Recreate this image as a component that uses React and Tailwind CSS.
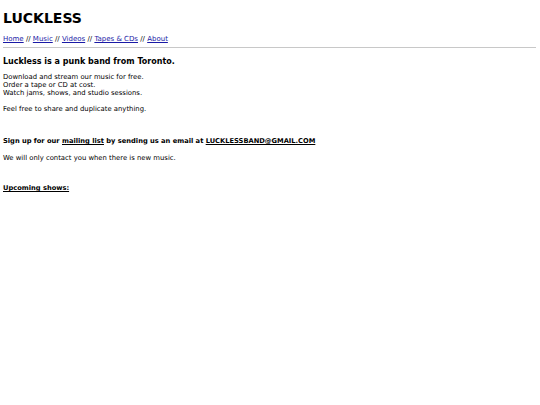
export default function App() {
  return (
    <div className="min-h-[405px] bg-white text-black px-[3px]" style={{fontFamily: '"DejaVu Sans", Verdana, sans-serif'}}>
      <h1 className="text-[14px] font-bold pt-[9px] leading-[18px]">LUCKLESS</h1>
      <nav className="text-[7px] leading-[9px] mt-[8px] text-black">
        <a href="#" className="underline text-[#1a1aa6]">Home</a> // <a href="#" className="underline text-[#1a1aa6]">Music</a> // <a href="#" className="underline text-[#1a1aa6]">Videos</a> // <a href="#" className="underline text-[#1a1aa6]">Tapes &amp; CDs</a> // <a href="#" className="underline text-[#1a1aa6]">About</a>
      </nav>
      <hr className="mt-[3px] mr-[1px] border-t border-[#c8c8c8]" />
      <h2 className="text-[8px] font-bold mt-[8px] leading-[11px]">Luckless is a punk band from Toronto.</h2>
      <div className="text-[6.85px] leading-[8px] mt-[6px]">
        <p>Download and stream our music for free.<br />Order a tape or CD at cost.<br />Watch jams, shows, and studio sessions.</p>
        <p className="mt-[8px]">Feel free to share and duplicate anything.</p>
      </div>
      <p className="text-[6.7px] font-bold leading-[9px] mt-[24px]">Sign up for our <a href="#" className="underline">mailing list</a> by sending us an email at <a href="#" className="underline">LUCKLESSBAND@GMAIL.COM</a></p>
      <p className="text-[6.85px] leading-[8px] mt-[8px]">We will only contact you when there is new music.</p>
      <p className="text-[6.7px] font-bold leading-[9px] mt-[22px]"><span className="underline">Upcoming shows:</span></p>
    </div>
  );
}
